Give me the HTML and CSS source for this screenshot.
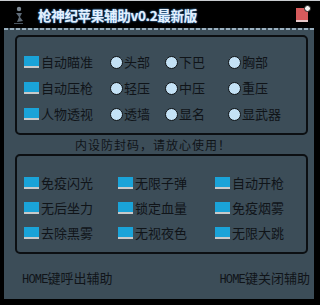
FILE: index.html
```html
<!DOCTYPE html>
<html lang="zh-CN">
<head>
  <meta charset="UTF-8">
  <title>枪神纪苹果辅助v0.2最新版</title>
  <link rel="stylesheet" href="styles.css">
</head>
<body>
  <div class="window">
    <div class="titlebar">
      <svg class="logo" width="12" height="20" viewBox="0 0 12 20">
        <circle cx="6" cy="4" r="2.2" fill="#7d8a96"/>
        <path d="M3 8 L9 8 L7 12 L10 16 L4 17 L6 12 Z" fill="#5e6b78"/>
        <rect x="1" y="18" width="9" height="1" fill="#4a5560"/>
      </svg>
      <span class="title">枪神纪苹果辅助v0.2最新版</span>
      <span class="close"></span>
    </div>
    <div class="dash"></div>

    <div class="panel">
      <div class="group top-group">
        <div class="row">
          <label class="check c1"><span class="box"></span>自动瞄准</label>
          <label class="radio c2"><span class="dot"></span>头部</label>
          <label class="radio c3"><span class="dot"></span>下巴</label>
          <label class="radio"><span class="dot"></span>胸部</label>
        </div>
        <div class="row">
          <label class="check c1"><span class="box"></span>自动压枪</label>
          <label class="radio c2"><span class="dot"></span>轻压</label>
          <label class="radio c3"><span class="dot"></span>中压</label>
          <label class="radio"><span class="dot"></span>重压</label>
        </div>
        <div class="row">
          <label class="check c1"><span class="box"></span>人物透视</label>
          <label class="radio c2"><span class="dot"></span>透墙</label>
          <label class="radio c3"><span class="dot"></span>显名</label>
          <label class="radio"><span class="dot"></span>显武器</label>
        </div>
      </div>

      <p class="notice">内设防封码，请放心使用！</p>

      <div class="group bottom-group">
        <div class="row">
          <label class="check d1"><span class="box"></span>免疫闪光</label>
          <label class="check d2"><span class="box"></span>无限子弹</label>
          <label class="check"><span class="box"></span>自动开枪</label>
        </div>
        <div class="row">
          <label class="check d1"><span class="box"></span>无后坐力</label>
          <label class="check d2"><span class="box"></span>锁定血量</label>
          <label class="check"><span class="box"></span>免疫烟雾</label>
        </div>
        <div class="row">
          <label class="check d1"><span class="box"></span>去除黑雾</label>
          <label class="check d2"><span class="box"></span>无视夜色</label>
          <label class="check"><span class="box"></span>无限大跳</label>
        </div>
      </div>

      <div class="footer">
        <span><b>HOME</b>键呼出辅助</span>
        <span><b>HOME</b>键关闭辅助</span>
      </div>
    </div>
  </div>
</body>
</html>
```

FILE: styles.css
```css
body {
  margin: 0;
  padding: 0;
  background-color: #000;
  font-family: "Noto Sans CJK SC", "Noto Sans", sans-serif;
}
.window {
  width: 320px;
  height: 305px;
  box-sizing: border-box;
  background-color: #000;
  border-top: 1px solid #c9ccd0;
  padding: 0 6px 6px 4px;
  display: flex;
  flex-direction: column;
}
.titlebar {
  height: 27px;
  display: flex;
  align-items: center;
}
.logo {
  margin-left: 9px;
  margin-right: 13px;
}
.title {
  font-size: 13.5px;
  font-weight: bold;
  color: #e4f0fc;
  text-shadow: 0 0 2px #4a8fd0, 0 0 1px #4a8fd0;
  letter-spacing: -0.3px;
}
.close {
  position: relative;
  margin-left: auto;
  margin-right: 6px;
  width: 12px;
  height: 12px;
  background-color: #d65a5c;
  border-bottom: 2px solid #e8c8c8;
}
.close::after {
  content: "";
  position: absolute;
  top: -3px;
  right: -3px;
  width: 5px;
  height: 5px;
  border-radius: 50%;
  background-color: #f4f4f4;
  border: 1px solid #222;
}
.dash {
  height: 3px;
  background-color: #3c4d58;
  background-image: repeating-linear-gradient(90deg, #9ab0bf 0 4px, transparent 4px 6px);
  background-size: 100% 2px;
  background-repeat: no-repeat;
}
.panel {
  flex: 1;
  background-color: #3c4d58;
  padding: 4px 5px 0 11px;
  color: #101418;
  font-size: 13px;
}
.group {
  border: 2px solid #0c0f12;
  border-radius: 5px;
  box-sizing: border-box;
  width: 293px;
  height: 100px;
  padding-left: 7px;
}
.top-group {
  padding-top: 12px;
}
.bottom-group {
  padding-top: 14px;
}
.row {
  display: flex;
  align-items: center;
  height: 26px;
}
.bottom-group .row {
  height: 25px;
}
label {
  display: flex;
  align-items: center;
  line-height: 16px;
  white-space: nowrap;
}
.c1 { width: 86px; }
.c2 { width: 55px; }
.c3 { width: 63px; }
.d1 { width: 94px; }
.d2 { width: 97px; }
.box {
  width: 15px;
  height: 10px;
  background-color: #1aa3d8;
  border-bottom: 2px solid #c9c9c9;
  margin-right: 2px;
}
.dot {
  width: 11px;
  height: 11px;
  border-radius: 50%;
  background-color: #c4e2f6;
  border: 1.5px solid #0d1114;
  margin-right: 1px;
}
.notice {
  margin: 0;
  height: 19px;
  line-height: 19px;
  padding-left: 60px;
  font-size: 12px;
  letter-spacing: 1px;
}
.footer {
  display: flex;
  justify-content: space-between;
  width: 288px;
  padding-left: 7px;
  margin-top: 17px;
  line-height: 14px;
}
.footer b {
  font-family: "Liberation Mono", monospace;
  font-weight: normal;
  font-size: 12px;
  letter-spacing: -0.8px;
}
```
